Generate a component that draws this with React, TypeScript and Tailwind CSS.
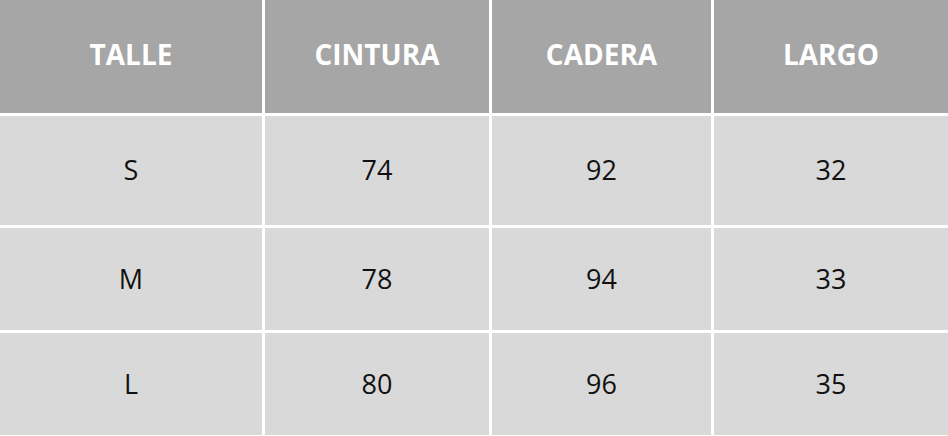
const headers = ["TALLE", "CINTURA", "CADERA", "LARGO"];

const rows = [
  { h: "h-[109px]", cells: ["S", "74", "92", "32"] },
  { h: "h-[102px]", cells: ["M", "78", "94", "33"] },
  { h: "h-[102px]", cells: ["L", "80", "96", "35"] },
];

export default function App() {
  return (
    <div className="w-[948px] h-[436px] bg-white font-['Open_Sans',sans-serif]">
      <div className="grid grid-cols-[262px_224px_219px_1fr] gap-[3px] pb-px">
        {headers.map((t) => (
          <div
            key={t}
            className="flex h-[113px] items-center justify-center bg-[#a6a6a6] pb-[6px] text-[28px] font-bold text-white"
          >
            {t}
          </div>
        ))}
        {rows.map((r) =>
          r.cells.map((c, i) => (
            <div
              key={r.cells[0] + i}
              className={`flex ${r.h} items-center justify-center bg-[#d9d9d9] text-[27px] text-[#111]`}
            >
              {c}
            </div>
          ))
        )}
      </div>
    </div>
  );
}
